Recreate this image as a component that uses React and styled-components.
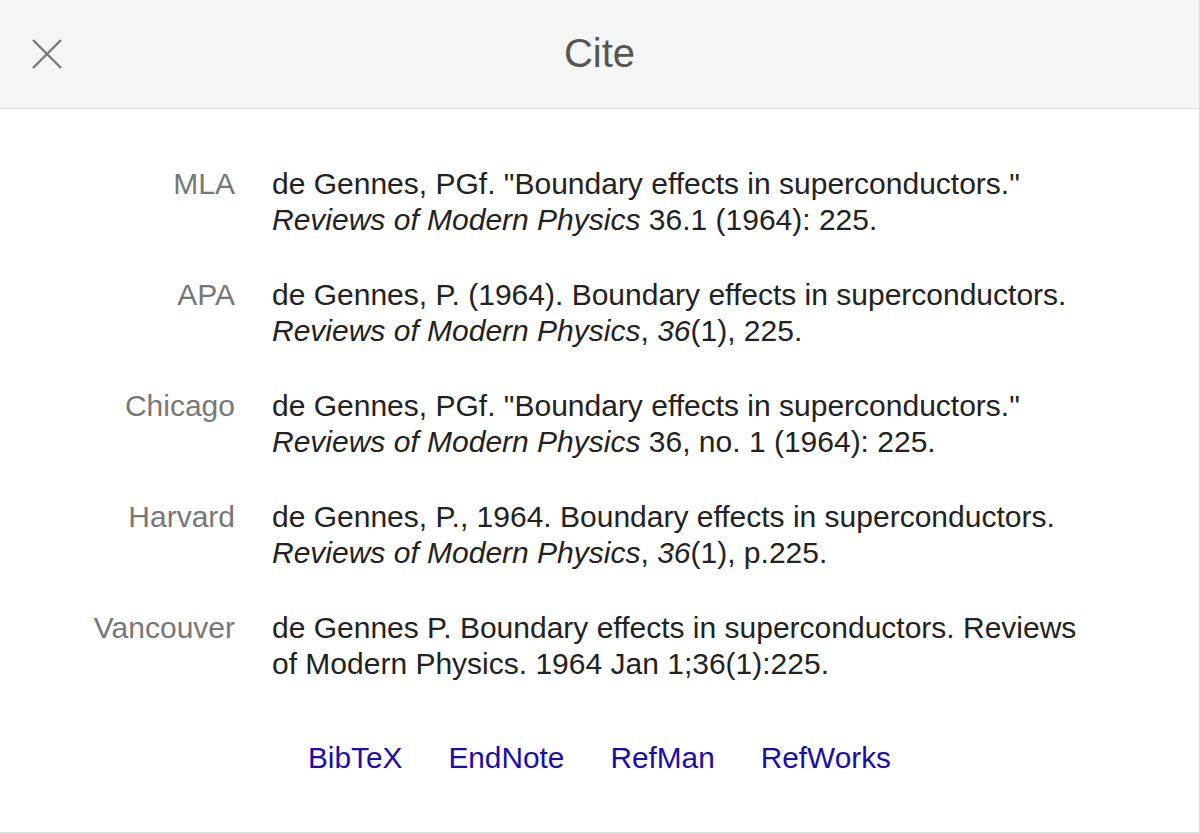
import { Fragment } from 'react';
import styled, { createGlobalStyle } from 'styled-components';

const Global = createGlobalStyle`
  html, body {
    margin: 0;
    padding: 0;
    background: #fff;
  }
  body {
    font-family: "Liberation Sans", Arial, sans-serif;
  }
`;

const Dialog = styled.div`
  box-sizing: border-box;
  width: 1200px;
  height: 834px;
  background: #fff;
  border-right: 1px solid #dcdcdc;
  border-bottom: 2px solid #dcdcdc;
  display: flex;
  flex-direction: column;
`;

const Header = styled.div`
  position: relative;
  box-sizing: border-box;
  height: 109px;
  background: #f5f5f5;
  border-bottom: 1px solid #e0e0e0;
  display: flex;
  align-items: center;
  justify-content: center;
`;

const Close = styled.button`
  position: absolute;
  left: 25px;
  top: 32px;
  width: 44px;
  height: 44px;
  padding: 0;
  border: 0;
  background: none;
  display: flex;
  align-items: center;
  justify-content: center;
  cursor: pointer;
`;

const Title = styled.h1`
  margin: 0;
  font-size: 40px;
  font-weight: normal;
  color: #555;
  line-height: 1;
  padding-bottom: 2px;
`;

const Body = styled.div`
  padding: 57px 110px 0 0;
  display: grid;
  grid-template-columns: 235px 1fr;
  column-gap: 37px;
  row-gap: 39px;
`;

const Label = styled.div`
  text-align: right;
  font-size: 30px;
  line-height: 36px;
  color: #777;
`;

const Citation = styled.div`
  font-size: 30px;
  line-height: 36px;
  color: #222;
`;

const Links = styled.div`
  display: flex;
  justify-content: center;
  gap: 46px;
  padding-top: 58px;
`;

const Link = styled.a`
  font-size: 29.8px;
  line-height: 36px;
  color: #1a0dab;
  text-decoration: none;
`;

const citations = [
  {
    style: 'MLA',
    text: (
      <>
        de Gennes, PGf. "Boundary effects in superconductors." <i>Reviews of Modern Physics</i> 36.1
        (1964): 225.
      </>
    ),
  },
  {
    style: 'APA',
    text: (
      <>
        de Gennes, P. (1964). Boundary effects in superconductors. <i>Reviews of Modern Physics</i>,{' '}
        <i>36</i>(1), 225.
      </>
    ),
  },
  {
    style: 'Chicago',
    text: (
      <>
        de Gennes, PGf. "Boundary effects in superconductors." <i>Reviews of Modern Physics</i> 36, no.
        1 (1964): 225.
      </>
    ),
  },
  {
    style: 'Harvard',
    text: (
      <>
        de Gennes, P., 1964. Boundary effects in superconductors. <i>Reviews of Modern Physics</i>,{' '}
        <i>36</i>(1), p.225.
      </>
    ),
  },
  {
    style: 'Vancouver',
    text: (
      <>
        de Gennes P. Boundary effects in superconductors. Reviews of Modern Physics. 1964 Jan
        1;36(1):225.
      </>
    ),
  },
];

const exports = ['BibTeX', 'EndNote', 'RefMan', 'RefWorks'];

export default function App() {
  return (
    <>
      <Global />
      <Dialog>
        <Header>
          <Close aria-label="Close">
            <svg width="32" height="32" viewBox="0 0 32 32">
              <path d="M2 2L30 30M30 2L2 30" stroke="#777" strokeWidth="2.4" fill="none" />
            </svg>
          </Close>
          <Title>Cite</Title>
        </Header>
        <Body>
          {citations.map((c) => (
            <Fragment key={c.style}>
              <Label>{c.style}</Label>
              <Citation>{c.text}</Citation>
            </Fragment>
          ))}
        </Body>
        <Links>
          {exports.map((e) => (
            <Link key={e} href="#">
              {e}
            </Link>
          ))}
        </Links>
      </Dialog>
    </>
  );
}
